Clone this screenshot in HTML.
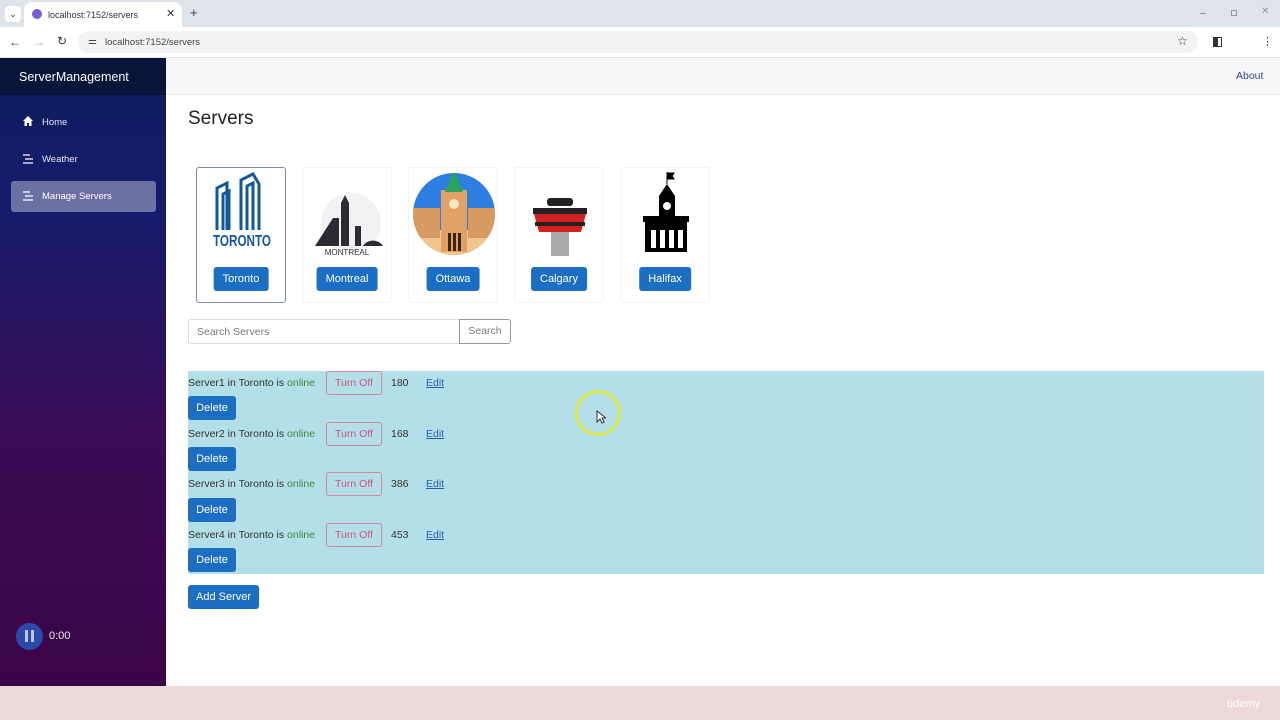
<!DOCTYPE html>
<html><head><meta charset="utf-8"><style>
*{box-sizing:border-box;margin:0;padding:0}
body{width:1280px;height:720px;overflow:hidden;font-family:"Liberation Sans",Arial,sans-serif;background:#fff;position:relative}
.abs{position:absolute}
.tabbar{left:0;top:0;width:1280px;height:27px;background:#dfe3ea}
.tab{left:24px;top:2px;width:158px;height:25px;background:#fff;border-radius:8px 8px 0 0;font-size:9px;color:#333}
.addr{left:0;top:27px;width:1280px;height:31px;background:#fff;border-bottom:1px solid #e5e5e5}
.url{left:78px;top:31px;width:1120px;height:22px;background:#f1f3f4;border-radius:11px}
.side{left:0;top:58px;width:166px;height:628px;background:linear-gradient(180deg,#0b1e5e 0%,#161c6a 25%,#3b0b55 60%,#3c0548 100%)}
.brand{left:0;top:58px;width:166px;height:37px;background:#091538;color:#fff;font-size:12.5px;padding:12px 0 0 19px}
.nav{color:#e3e6f2;font-size:9.5px;left:42px}
.active{left:11px;top:181px;width:145px;height:31px;background:#6b72a3;border-radius:3px}
.topbar{left:166px;top:58px;width:1114px;height:37px;background:#f7f7f9;border-bottom:1px solid #e8e8e8}
.card{top:167px;width:90px;height:136px;border:1px solid #f3f3f3;border-radius:3px;background:#fff}
.card.sel{border:1px solid #7c8a99}
.btn{background:#1b6ec2;color:#fff;font-size:11px;border-radius:3px;text-align:center;line-height:24px;height:24px}
.card .btn{position:absolute;top:99px;left:50%;transform:translateX(-50%);padding:0 9px}
.card svg{position:absolute;left:4px;top:0}
.band{left:188px;top:371px;width:1076px;height:203px;background:#b3dfe8}
.row{left:188px;font-size:10.5px;color:#333}
.on{color:#3d8b3d}
.to{left:326px;width:56px;height:24px;border:1px solid #d18a9e;border-radius:3px;color:#c9557a;font-size:10.5px;text-align:center;line-height:22px}
.num{left:391px;font-size:10.5px;color:#333}
.edit{left:426px;font-size:10.5px;color:#2a5db0;text-decoration:underline}
.del{left:188px;width:48px}
.bottom{left:0;top:686px;width:1280px;height:34px;background:#edd9d8}
</style></head><body>
<div class="abs tabbar"></div>
<div class="abs" style="left:5px;top:6px;width:16px;height:16px;background:#fff;border-radius:4px;font-size:9px;text-align:center;line-height:16px;color:#333">⌄</div>
<div class="abs tab"><span class="abs" style="left:8px;top:7px;width:10px;height:10px;border-radius:50%;background:#7b5bd6"></span><span class="abs" style="left:24px;top:8px">localhost:7152/servers</span><span class="abs" style="left:142px;top:5px;font-size:11px">✕</span></div>
<div class="abs" style="left:190px;top:5px;font-size:13px;color:#444">+</div>
<div class="abs" style="left:1200px;top:13px;width:6px;height:1px;background:#999"></div>
<div class="abs" style="left:1231px;top:10px;width:6px;height:6px;border:1px solid #999"></div>
<div class="abs" style="left:1261px;top:6px;font-size:10px;color:#999">✕</div>
<div class="abs addr"></div>
<div class="abs" style="left:9px;top:35px;font-size:12px;color:#333">←</div>
<div class="abs" style="left:33px;top:35px;font-size:12px;color:#aaa">→</div>
<div class="abs" style="left:57px;top:34px;font-size:12px;color:#333">↻</div>
<div class="abs url"></div>
<div class="abs" style="left:88px;top:36px;font-size:10px;color:#444">⚌</div>
<div class="abs" style="left:105px;top:37px;font-size:9.5px;color:#444">localhost:7152/servers</div>
<div class="abs" style="left:1177px;top:34px;font-size:12px;color:#333">☆</div>
<div class="abs" style="left:1213px;top:37px;width:9px;height:10px;border:1.5px solid #333;border-left-width:5px"></div>
<div class="abs" style="left:1262px;top:35px;font-size:11px;color:#333">⋮</div>
<div class="abs side"></div>
<div class="abs brand">ServerManagement</div>
<div class="abs active"></div>
<svg class="abs" style="left:22px;top:115px" width="12" height="12" viewBox="0 0 12 12"><path d="M6 1L1 6h1.5v5h2.5V8h2v3h2.5V6H11z" fill="#fff"/></svg>
<div class="abs nav" style="top:117px">Home</div>
<svg class="abs" style="left:22px;top:154px" width="12" height="10"><path d="M1 1h7M3 5h8M1 9h10" stroke="#fff" stroke-width="1.2"/></svg>
<div class="abs nav" style="top:154px">Weather</div>
<svg class="abs" style="left:22px;top:191px" width="12" height="10"><path d="M1 1h7M3 5h8M1 9h10" stroke="#fff" stroke-width="1.2"/></svg>
<div class="abs nav" style="top:191px;color:#fff">Manage Servers</div>
<div class="abs" style="left:16px;top:623px;width:27px;height:27px;border-radius:50%;background:#2b4aa8"></div>
<div class="abs" style="left:25px;top:630px;width:3px;height:12px;background:#bcc6ea"></div>
<div class="abs" style="left:31px;top:630px;width:3px;height:12px;background:#bcc6ea"></div>
<div class="abs" style="left:49px;top:630px;font-size:11px;color:#eee">0:00</div>
<div class="abs topbar"></div>
<div class="abs" style="left:1236px;top:70px;font-size:10.5px;color:#2a4d80">About</div>
<div class="abs" style="left:188px;top:108px;font-size:19px;color:#222">Servers</div>

<div class="abs card sel" style="left:196px"><svg width="82" height="95" viewBox="0 0 82 95"><g fill="none" stroke="#11579a" stroke-width="3"><path d="M16 62V20l10-5v47M22 62V26l6-3v39M40 62V12l12-6 6 10v46M46 62V18l6-3v47"/></g><text x="41" y="78" text-anchor="middle" font-family="Liberation Sans" font-weight="bold" font-size="16" fill="#11579a" textLength="58" lengthAdjust="spacingAndGlyphs">TORONTO</text></svg><div class="btn">Toronto</div></div>
<div class="abs card" style="left:302px"><svg width="82" height="95" viewBox="0 0 82 95"><circle cx="44" cy="55" r="30" fill="#f1f2f4"/><path d="M8 78l18-28h6v28zM34 78V35l4-8 4 8v43zM48 78V58h6v20zM56 78a12 12 0 0 1 20 0z" fill="#2a2b33"/><text x="40" y="87" text-anchor="middle" font-size="8" font-family="Liberation Sans" fill="#333">MONTREAL</text></svg><div class="btn">Montreal</div></div>
<div class="abs card" style="left:408px"><svg width="82" height="95" viewBox="0 0 82 95"><defs><clipPath id="c"><circle cx="41" cy="46" r="41"/></clipPath></defs><g clip-path="url(#c)"><rect width="82" height="95" fill="#2e7de0"/><rect x="0" y="62" width="82" height="30" fill="#f2c58a"/><path d="M0 40h27v30H0zM55 40h27v30H55z" fill="#d99a62"/><rect x="28" y="22" width="26" height="62" fill="#e0a066"/><path d="M41 2l-9 22h18z" fill="#2ba35a"/><circle cx="41" cy="36" r="5" fill="#f5e6c8"/><path d="M35 65h3v18h-3zM40 65h3v18h-3zM45 65h3v18h-3z" fill="#3a2414"/></g></svg><div class="btn">Ottawa</div></div>
<div class="abs card" style="left:514px"><svg width="82" height="95" viewBox="0 0 82 95"><rect x="28" y="30" width="26" height="8" rx="3" fill="#222"/><path d="M14 42h54l-6 22H20z" fill="#d62020"/><rect x="14" y="40" width="54" height="6" fill="#222"/><rect x="16" y="54" width="50" height="4" fill="#222"/><rect x="32" y="64" width="18" height="24" fill="#aaa"/></svg><div class="btn">Calgary</div></div>
<div class="abs card" style="left:620px"><svg width="82" height="95" viewBox="0 0 82 95"><path d="M42 4v12M42 5h7l-2 3 2 3h-7" stroke="#000" fill="#000"/><path d="M34 28l8-12 8 12z M34 28h16v20H34z M18 48h46v6H18z M20 54h42v30H20z" fill="#000"/><circle cx="42" cy="38" r="4" fill="#fff"/><path d="M26 62h5v18h-5zM35 62h5v18h-5zM44 62h5v18h-5zM53 62h5v18h-5z" fill="#fff"/></svg><div class="btn">Halifax</div></div>

<div class="abs" style="left:188px;top:319px;width:272px;height:25px;border:1px solid #ddd;border-radius:3px 0 0 3px;font-size:10.5px;color:#777;padding:6px 8px">Search Servers</div>
<div class="abs" style="left:459px;top:319px;width:52px;height:25px;border:1px solid #999;border-radius:0 3px 3px 0;font-size:10.5px;color:#777;text-align:center;line-height:23px">Search</div>

<div class="abs band"></div>
<div class="abs row" style="top:377px">Server1 in Toronto is <span class="on">online</span></div>
<div class="abs to" style="top:371px">Turn Off</div><div class="abs num" style="top:377px">180</div><div class="abs edit" style="top:377px">Edit</div>
<div class="abs btn del" style="top:396px">Delete</div>
<div class="abs row" style="top:428px">Server2 in Toronto is <span class="on">online</span></div>
<div class="abs to" style="top:422px">Turn Off</div><div class="abs num" style="top:428px">168</div><div class="abs edit" style="top:428px">Edit</div>
<div class="abs btn del" style="top:447px">Delete</div>
<div class="abs row" style="top:478px">Server3 in Toronto is <span class="on">online</span></div>
<div class="abs to" style="top:472px">Turn Off</div><div class="abs num" style="top:478px">386</div><div class="abs edit" style="top:478px">Edit</div>
<div class="abs btn del" style="top:498px">Delete</div>
<div class="abs row" style="top:529px">Server4 in Toronto is <span class="on">online</span></div>
<div class="abs to" style="top:523px">Turn Off</div><div class="abs num" style="top:529px">453</div><div class="abs edit" style="top:529px">Edit</div>
<div class="abs btn del" style="top:548px">Delete</div>
<div class="abs btn" style="left:188px;top:585px;width:71px">Add Server</div>
<div class="abs" style="left:575px;top:390px;width:46px;height:46px;border:3px solid #dfe84a;border-radius:50%"></div>
<svg class="abs" style="left:596px;top:410px" width="10" height="14"><path d="M1 1v11l3-3 2 4 2-1-2-4h4z" fill="#fff" stroke="#334" stroke-width="1"/></svg>

<div class="abs bottom"></div>
<div class="abs" style="left:1227px;top:698px;font-size:11px;color:#fff">ûdemy</div>
</body></html>
